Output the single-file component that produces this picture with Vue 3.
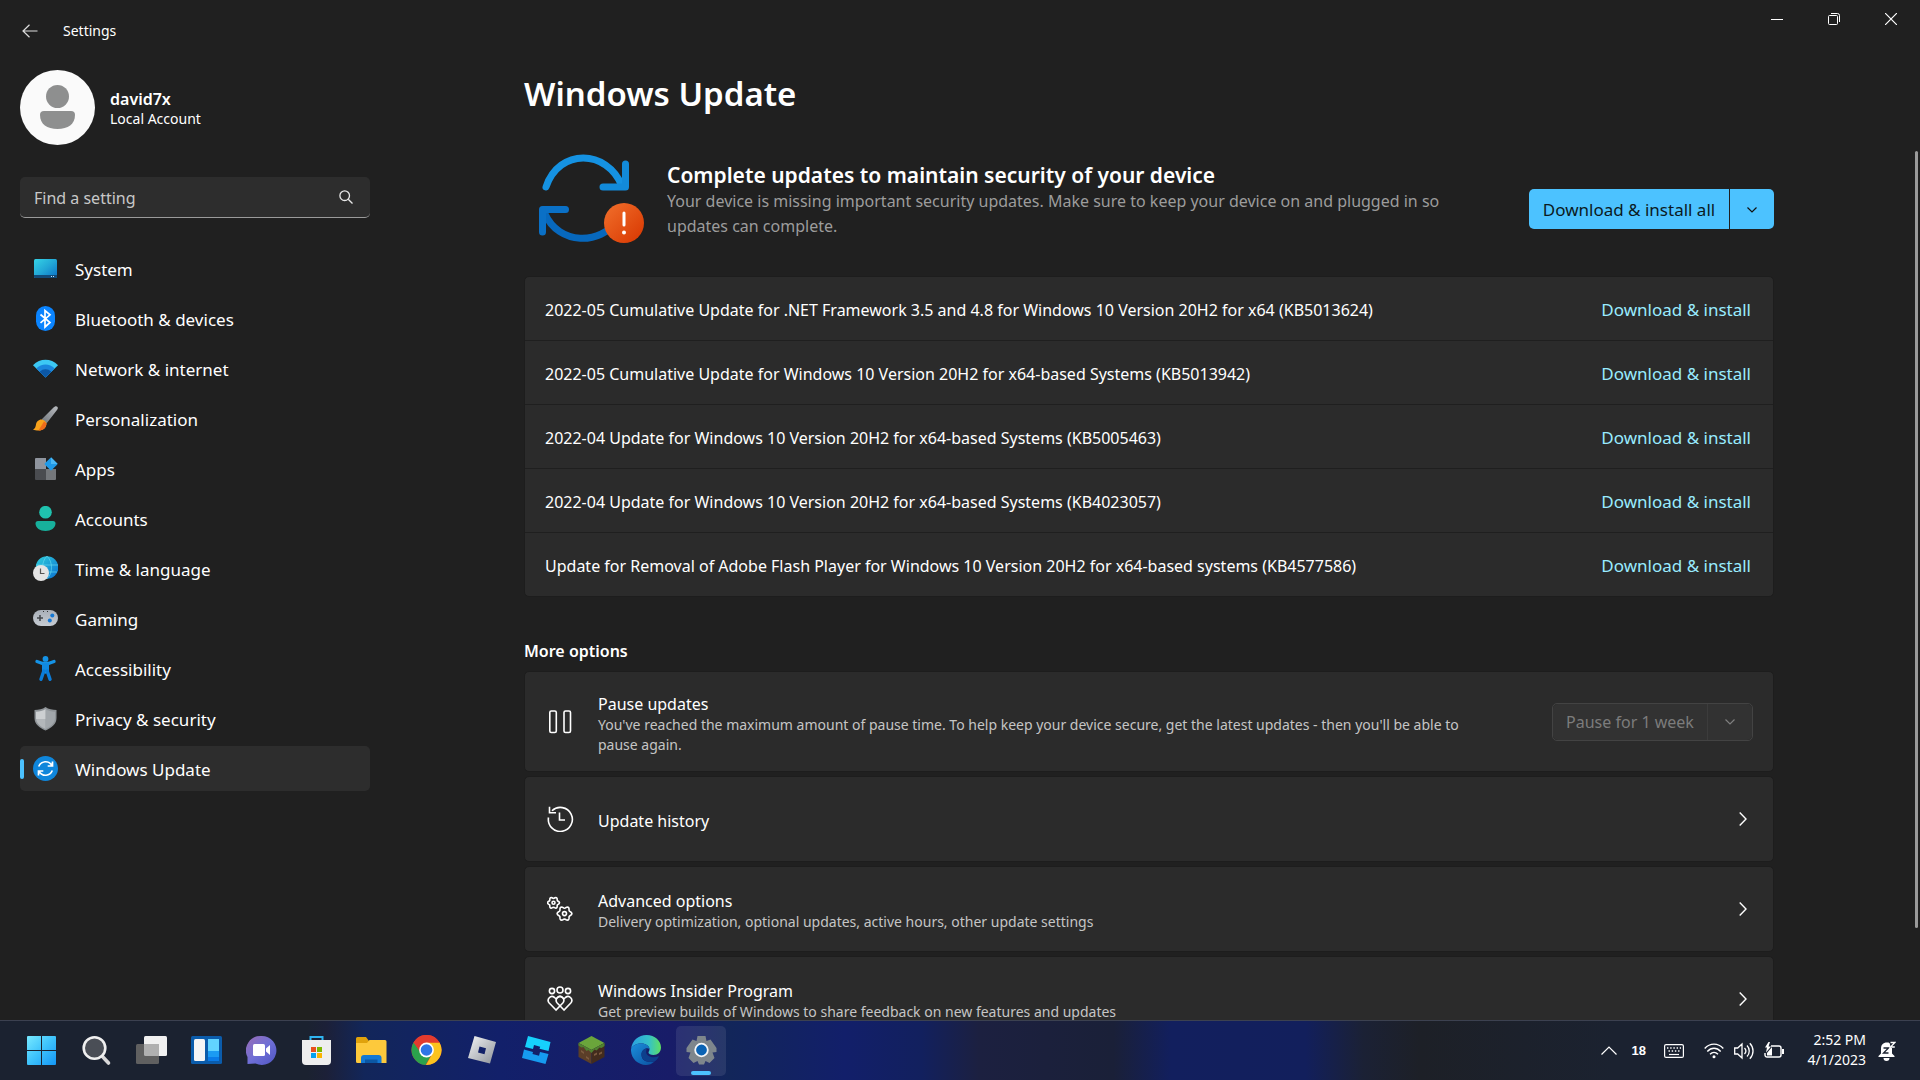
<script setup>
import { ref } from 'vue'

const query = ref('')

const navItems = [
  {
    label: 'System',
    art: `<defs><linearGradient id="n-sys" x1="0" y1="0" x2="1" y2="1"><stop offset="0" stop-color="#35d3e6"/><stop offset=".5" stop-color="#22a7d6"/><stop offset="1" stop-color="#0b6fc4"/></linearGradient></defs>
      <rect x="1" y="3" width="23" height="19" rx="1.500" fill="url(#n-sys)"/><path d="M1 19h23v1.500a1.500 1.500 0 0 1-1.500 1.500h-20A1.500 1.500 0 0 1 1 20.500z" fill="#124a78"/><path d="M18 20h1v1h-1zM20 20h1v1h-1z" fill="#bfe6ff"/>`
  },
  {
    label: 'Bluetooth & devices',
    art: `<rect x="3" y="0" width="19" height="25" rx="9.500" fill="#0a84ff"/><path d="M7.500 8.500l9.500 8-5 4.500V4.500L17 8.800l-9.500 8" fill="none" stroke="#fff" stroke-width="1.700"/>`
  },
  {
    label: 'Network & internet',
    art: `<path d="M0 9.300C7 2 18 2 25 9.300L12.500 21.500z" fill="#3cc8f4"/><path d="M3.300 12.500c5.200-5.200 13.200-5.200 18.400 0L12.500 21.500z" fill="#1a86dd"/><path d="M6.600 15.700c3.600-3.300 8.200-3.300 11.800 0L12.500 21.500z" fill="#0c57a5"/>`
  },
  {
    label: 'Personalization',
    art: `<defs><linearGradient id="n-br" x1="1" y1="0" x2="0" y2="1"><stop offset="0" stop-color="#b9bcc0"/><stop offset="1" stop-color="#6f757b"/></linearGradient></defs>
      <path d="M22 .500c1.600-.800 3.300.400 2.700 2.200-.200.600-.500 1-.900 1.500L13.500 17.500 8.500 13.500 20.500 1.600z" fill="url(#n-br)"/><path d="M8.500 13.500c2.300.3 4.300 1.800 5 4-.300 4.500-3.500 7-8 7-2 0-4-.300-5.500-1 2-.800 2.500-2.500 3-5 .400-2.600 2.500-5 5.500-5z" fill="#f8a21b"/><path d="M11 15.500l2.500 2c-.300 4.500-3.500 7-8 7z" fill="#ee6b1c"/>`
  },
  {
    label: 'Apps',
    art: `<path d="M3 2h10v11H2V3a1 1 0 0 1 1-1z" fill="#8f949d"/><path d="M2 13h11v11H3a1 1 0 0 1-1-1z" fill="#4a4c50"/><path d="M13 13h10v10a1 1 0 0 1-1 1h-9z" fill="#74777b"/><rect x="13.200" y="3.200" width="9.600" height="9.600" rx="1" transform="rotate(45 18 8)" fill="#1f9ae8"/><path d="M18 1.300L24.700 8 18 8z" fill="#4ab8f5"/>`
  },
  {
    label: 'Accounts',
    art: `<circle cx="12.500" cy="6.200" r="6.300" fill="#1fc2ae"/><path d="M5 15h15a2.500 2.500 0 0 1 2.500 2.500c0 4.500-4.500 7.500-10 7.500s-10-3-10-7.500A2.500 2.500 0 0 1 5 15z" fill="#17b09c"/>`
  },
  {
    label: 'Time & language',
    art: `<defs><linearGradient id="n-tm" x1="0" y1="0" x2="1" y2="1"><stop offset="0" stop-color="#2fd0dc"/><stop offset="1" stop-color="#0a6fd0"/></linearGradient></defs>
      <circle cx="14" cy="11.500" r="11.300" fill="url(#n-tm)"/><path d="M3 9h22M4 16h20M14 0c-6 6-6 17 0 23M14 0c6 6 6 17 0 23" stroke="#6fe0f2" stroke-opacity=".6" fill="none"/><circle cx="8" cy="17" r="8" fill="#e4e4e4"/><path d="M7.500 12.500v5h4" stroke="#555" stroke-width="1.200" fill="none"/>`
  },
  {
    label: 'Gaming',
    art: `<defs><linearGradient id="n-gm" x1="0" y1="0" x2="0" y2="1"><stop offset="0" stop-color="#a9afb8"/><stop offset="1" stop-color="#c7ccd3"/></linearGradient></defs>
      <rect x="0" y="4" width="25" height="16" rx="8" fill="url(#n-gm)"/><path d="M7 9v6M4 12h6" stroke="#46494e" stroke-width="1.600"/><circle cx="19.300" cy="9.500" r="2" fill="#1477d4"/><circle cx="16.800" cy="14.500" r="2" fill="#1477d4"/><path d="M10 5h1v1h-1zM14 5h1v1h-1z" fill="#333"/>`
  },
  {
    label: 'Accessibility',
    art: `<circle cx="12.500" cy="2.900" r="2.900" fill="#1593e6"/><path d="M4 5.500l5.500 2h6l5.500-2M12.500 8v8" stroke="#1593e6" stroke-width="3.400" stroke-linecap="round" stroke-linejoin="round" fill="none"/><path d="M9 7h7v8H9z" fill="#118ae0"/><path d="M10.800 15L8 23.300M14.200 15l2.800 8.300" stroke="#0b7cd8" stroke-width="3.400" stroke-linecap="round"/>`
  },
  {
    label: 'Privacy & security',
    art: `<path d="M12.500 1c3 2.300 7 3 11 3v8c0 6-5 10-11 12.500C6.500 22 1.500 18 1.500 12V4c4 0 8-.700 11-3z" fill="#8f9498"/><path d="M12.500 3c2.500 1.800 6 2.700 9.500 2.800V12c0 5-4 8.500-9.500 11z" fill="#a2a7ab"/><path d="M12.500 3C10 4.800 6.500 5.700 3 5.800V12c0 .400 0 .700.100 1h9.400z" fill="#cdd0d2"/><path d="M3.100 13h9.400v10C7.500 20.800 3.600 17.500 3.100 13z" fill="#b3b7ba"/>`
  },
  {
    label: 'Windows Update',
    active: true,
    art: `<circle cx="12.500" cy="12.500" r="12.500" fill="#0f86db"/><path d="M5.700 10.500C8 4.700 15.500 4 19 9.500M19.300 14.500C17 20.300 9.500 21 6 15.500M19.500 5.500v4.500h-4.800M5.500 19.500V15h4.800" stroke="#fff" stroke-width="1.700" fill="none"/>`
  }
]

const updates = [
  '2022-05 Cumulative Update for .NET Framework 3.5 and 4.8 for Windows 10 Version 20H2 for x64 (KB5013624)',
  '2022-05 Cumulative Update for Windows 10 Version 20H2 for x64-based Systems (KB5013942)',
  '2022-04 Update for Windows 10 Version 20H2 for x64-based Systems (KB5005463)',
  '2022-04 Update for Windows 10 Version 20H2 for x64-based Systems (KB4023057)',
  'Update for Removal of Adobe Flash Player for Windows 10 Version 20H2 for x64-based systems (KB4577586)'
]

const gear = (cx, cy, r) => {
  const pts = []
  for (let i = 0; i < 48; i++) {
    const a = (i / 48) * Math.PI * 2
    const k = r * (1 + 0.15 * Math.cos(6 * a))
    pts.push(`${(cx + k * Math.cos(a)).toFixed(2)} ${(cy + k * Math.sin(a)).toFixed(2)}`)
  }
  return `<path d="M${pts.join('L')}z"/>`
}

const options = [
  {
    title: 'Update history',
    art: `<path d="M1.500 11.500A12 12 0 1 0 5 4.800M2.500 .800v6h6.500M12.500 6.500v7.500h5.500"/>`
  },
  {
    title: 'Advanced options',
    detail: 'Delivery optimization, optional updates, active hours, other update settings',
    art: `${gear(6.5, 6.8, 5.2)}<circle cx="6.500" cy="6.800" r="1.500"/>${gear(17.5, 17.6, 6.4)}<circle cx="17.500" cy="17.600" r="2"/>`
  },
  {
    title: 'Windows Insider Program',
    detail: 'Get preview builds of Windows to share feedback on new features and updates',
    art: `<circle cx="5" cy="5" r="2.600"/><circle cx="13" cy="4" r="3"/><circle cx="21" cy="5" r="2.600"/><path d="M9 24l-6.800-7c-3-3.500 1.500-8.500 5.300-5.500L9 12.800l1.500-1.300c3.800-3 8.300 2 5.300 5.500z"/><path d="M17 24l-6.800-7c-3-3.500 1.500-8.500 5.300-5.500l1.500 1.300 1.500-1.300c3.800-3 8.300 2 5.300 5.500z"/>`
  }
]

const taskbar = [
  {
    label: 'Start',
    art: `<defs><linearGradient id="t-st" gradientUnits="userSpaceOnUse" x1="0" y1="0" x2="30" y2="30"><stop offset="0" stop-color="#7cecff"/><stop offset=".5" stop-color="#3fc3fb"/><stop offset="1" stop-color="#1496f5"/></linearGradient></defs><path d="M2 1h13v14H1V2a1 1 0 0 1 1-1zM16 1h13a1 1 0 0 1 1 1v13H16zM1 16h14v14H2a1 1 0 0 1-1-1zM16 16h14v13a1 1 0 0 1-1 1H16z" fill="url(#t-st)"/>`
  },
  {
    label: 'Search',
    art: `<path d="M20.500 20.500l7 7.500" stroke="#d8d8d8" stroke-width="3.600" stroke-linecap="round"/><circle cx="13.500" cy="13" r="10.800" fill="#4a4e56" stroke="#f0f0f0" stroke-width="2.600"/>`
  },
  {
    label: 'Task View',
    art: `<rect x="8" y="1" width="23" height="20" rx="1.500" fill="#f1f1f1"/><rect x="0" y="9" width="23" height="20" rx="1.500" fill="#606060"/><path d="M8 9h15v12H9.500A1.500 1.500 0 0 1 8 19.500z" fill="#b0b0b0"/>`
  },
  {
    label: 'Widgets',
    art: `<rect x="0" y="1" width="31" height="28" rx="1.500" fill="#0b5cab"/><rect x="3" y="4" width="11" height="22" rx="1.500" fill="#f5f5f5"/><path d="M17 4h11v12H17z" fill="#62d3ff"/><path d="M17 16h11v6H17z" fill="#1b9bf3"/><path d="M17 22h11v4H17z" fill="#0a7be8"/>`
  },
  {
    label: 'Chat',
    art: `<defs><linearGradient id="t-ch" x1="0" y1="0" x2="1" y2="1"><stop offset="0" stop-color="#9a6cb4"/><stop offset=".5" stop-color="#6f6fd6"/><stop offset="1" stop-color="#4f55c4"/></linearGradient></defs><path d="M15.500 1a14.500 14.500 0 1 1-6 27.500L1.500 29V22A14.500 14.500 0 0 1 15.500 1z" fill="url(#t-ch)"/><rect x="7" y="9" width="12" height="12" rx="1.500" fill="#fff"/><path d="M20 13.500l4-3.500v10l-4-3.500z" fill="#fff"/>`
  },
  {
    label: 'Microsoft Store',
    art: `<path d="M9.500 7V2h12v5" fill="none" stroke="#2fb4f0" stroke-width="2"/><path d="M1 5h29v21a4 4 0 0 1-4 4H5a4 4 0 0 1-4-4z" fill="#eeeeee"/><path d="M10 12h5v5h-5z" fill="#e8501f"/><path d="M16 12h5v5h-5z" fill="#7cb800"/><path d="M10 18h5v5h-5z" fill="#06a1ee"/><path d="M16 18h5v5h-5z" fill="#fbb400"/>`
  },
  {
    label: 'File Explorer',
    art: `<path d="M0 3.500A1.500 1.500 0 0 1 1.500 2H10l3 4v3H0z" fill="#e0a20c"/><path d="M0 8h11l2.500-3H29a1.500 1.500 0 0 1 1.500 1.500V28H1.500A1.500 1.500 0 0 1 0 26.500z" fill="#fdc93c"/><path d="M5 28v-5a3 3 0 0 1 3-3h14.500a3 3 0 0 1 3 3v5z" fill="#1278d4"/><path d="M9 24.500h12.500V28H9z" fill="#0b57a4"/>`
  },
  {
    label: 'Google Chrome',
    art: `<circle cx="15.500" cy="15" r="15" fill="#e33b2e"/><path d="M2.500 7.500A15 15 0 0 0 14.500 30l7-12-12-.500z" fill="#2ba24c"/><path d="M28.500 7.500A15 15 0 0 1 15 30l7-12.500L15.500 7.500z" fill="#fcc31e"/><path d="M2.500 7.500A15 15 0 0 1 28.500 7.500H15.500L9.500 13z" fill="#e33b2e"/><circle cx="15.500" cy="15" r="7.400" fill="#fff"/><circle cx="15.500" cy="15" r="5.800" fill="#2f76e6"/>`
  },
  {
    label: 'Roblox',
    art: `<defs><linearGradient id="t-rb" x1="0" y1="0" x2="1" y2="1"><stop offset="0" stop-color="#f4f5f6"/><stop offset="1" stop-color="#8d9299"/></linearGradient></defs><path fill-rule="evenodd" d="M8.500 1L30 7l-6 21.500L2 23zM13.500 11.500l-1.500 6 6.500 1.700 1.500-6z" fill="url(#t-rb)"/>`
  },
  {
    label: 'Roblox Studio',
    art: `<path d="M7 1l22.500 6-2 9-9-2.300.700-2-6.200-1.700L12 14 4 12z" fill="#16d1fc"/><path d="M3 14.500l9 2.500-.500 2 6.500 1.700 1-3.700 8.500 2-3 10L1 23z" fill="#169bf0"/>`
  },
  {
    label: 'Minecraft',
    art: `<path d="M15.500 1l13 7-13 7-13-7z" fill="#6aa53b"/><path d="M2.500 8l13 7v14l-13-7z" fill="#5b3e28"/><path d="M28.500 8l-13 7v14l13-7z" fill="#432c1d"/><path d="M2.500 8l13 7 13-7v3l-3 2-2-.500-3 3-2-1-3 3.500-3-3-2 1-3-4-2 .500-3-2z" fill="#4f8230"/><path d="M5 15l3 2v2l-3-2zM10 21l3 2v2l-3-2zM18 19l3-1.500v2L18 21zM23 18l3-1.500v2L23 20z" fill="#7b5a3f"/>`
  },
  {
    label: 'Microsoft Edge',
    art: `<defs><linearGradient id="t-e1" x1="0" y1="0" x2="1" y2="0"><stop offset="0" stop-color="#2a9fe0"/><stop offset=".6" stop-color="#35c1c8"/><stop offset="1" stop-color="#5fdf62"/></linearGradient><linearGradient id="t-e2" x1="0" y1="0" x2="1" y2="1"><stop offset="0" stop-color="#1b8fdc"/><stop offset="1" stop-color="#0b50a0"/></linearGradient></defs>
      <path d="M0 14C1 5.500 7.500 0 15.500 0 24 0 30 6 30 12.500c0 4.500-3.200 7.500-7.500 7.500-3 0-5-1-5-2.500 0-1 1-1.500 1-3.500 0-3-3.500-5.500-8-5.500C5.500 8.500 1.500 10.500 0 14z" fill="url(#t-e1)"/><path d="M0 14c1.500-3.500 5.500-5.500 10.500-5.500 4.500 0 8 2.500 8 5.500-3-2-8 1-8 6 0 5.500 6 8 13 6.500C21 29 18 30 15 30 6.500 30-.500 23 0 14z" fill="url(#t-e2)"/><path d="M10.500 20c-.500-3.500 2-6.500 5.500-6.500-1 2-1.500 5 1 7s7 2.500 11 .500c-1 2.500-2.500 4.200-4.500 5.500-7 1.500-12.500-1-13-6.500z" fill="#0d3f8c"/>`
  },
  {
    label: 'Settings',
    active: true,
    art: `<path d="M11.500 1h8l1 5 4-1.500L30.500 13v4l-4 .500 2 5.500-5 5-4-2-1.500 3.500h-5L11.500 26l-4 2-5-5 2-5.500-4-.500v-4l6-8.500 4 1.500z" fill="#7e868c"/><circle cx="15.500" cy="15" r="9" fill="#7e868c"/><circle cx="15.500" cy="15" r="6.300" fill="#0b63b4" stroke="#f4f6f8" stroke-width="1.800"/>`
  }
]
</script>

<template>
  <div class="desktop">
    <div class="window">
      <aside class="sidebar">
        <header class="app-title">
          <button class="plain back" aria-label="Back">
            <svg width="16" height="14" viewBox="0 0 16 14" fill="none" stroke="#ddd" stroke-width="1.200"><path d="M15.500 7H1M7.500 .700L1 7l6.500 6.300" /></svg>
          </button>
          <span>Settings</span>
        </header>

        <section class="account">
          <svg width="75" height="75" viewBox="0 0 75 75">
            <circle cx="37.500" cy="37.500" r="37.500" fill="#fafafa" />
            <circle cx="37.500" cy="26.500" r="11.500" fill="#8e8f8f" />
            <path d="M24 41h27a4 4 0 0 1 4 4c0 9-7 14-17.500 14S20 54 20 45a4 4 0 0 1 4-4z" fill="#8e8f8f" />
          </svg>
          <div>
            <strong>david7x</strong>
            <span>Local Account</span>
          </div>
        </section>

        <label class="search">
          <input v-model="query" type="text" placeholder="Find a setting" aria-label="Find a setting" />
          <svg width="14" height="14" viewBox="0 0 14 14" fill="none" stroke="#e8e8e8" stroke-width="1.300"><circle cx="5.700" cy="5.700" r="4.800" /><path d="M9.200 9.200L13.500 13.500" /></svg>
        </label>

        <nav>
          <a v-for="item in navItems" :key="item.label" href="#" :class="{ active: item.active }">
            <svg width="25" height="25" viewBox="0 0 25 25" v-html="item.art"></svg>
            <span>{{ item.label }}</span>
          </a>
        </nav>
      </aside>

      <main>
        <div class="caption">
          <button class="plain" aria-label="Minimize"><svg width="12" height="12" viewBox="0 0 12 12"><path d="M0 6h12v1H0z" fill="#fff" /></svg></button>
          <button class="plain" aria-label="Restore"><svg width="12" height="12" viewBox="0 0 12 12" fill="none" stroke="#fff"><rect x=".500" y="2.500" width="9" height="9" rx="1" /><path d="M3 .500h6.500a2 2 0 0 1 2 2V9" /></svg></button>
          <button class="plain" aria-label="Close"><svg width="12" height="12" viewBox="0 0 12 12" fill="none" stroke="#fff" stroke-width="1.200"><path d="M0 0l12 12M12 0L0 12" /></svg></button>
        </div>

        <div class="content">
          <h1>Windows Update</h1>

          <section class="hero">
            <svg width="106" height="90" viewBox="0 0 106 90" fill="none" stroke-linecap="round" stroke-linejoin="round">
              <defs>
                <linearGradient id="alert-fill" x1="0" y1="0" x2="1" y2="1"><stop offset="0" stop-color="#f1702c" /><stop offset="1" stop-color="#d83600" /></linearGradient>
              </defs>
              <path d="M7 33C20-6 68-5 83 32" stroke="#1592e2" stroke-width="7" />
              <path d="M86.500 10v23H64" stroke="#128ada" stroke-width="7" />
              <path d="M6 60C20 91 61 92 80 65" stroke="#0768bd" stroke-width="7" />
              <path d="M3.500 78V55.500h23" stroke="#0a70c6" stroke-width="7" />
              <circle cx="85" cy="69" r="20" fill="url(#alert-fill)" />
              <path d="M85 59v12" stroke="#fff" stroke-width="3" />
              <circle cx="85" cy="78.500" r="2" fill="#fff" />
            </svg>
            <div class="hero-text">
              <h2>Complete updates to maintain security of your device</h2>
              <p>Your device is missing important security updates. Make sure to keep your device on and plugged in so updates can complete.</p>
            </div>
            <div class="split primary">
              <button>Download &amp; install all</button>
              <button aria-label="More install options">
                <svg width="10" height="6" viewBox="0 0 10 6" fill="none" stroke="#101010" stroke-width="1.200"><path d="M.500 .500L5 5 9.500 .500" /></svg>
              </button>
            </div>
          </section>

          <ul class="updates">
            <li v-for="name in updates" :key="name">
              <span>{{ name }}</span>
              <a href="#">Download &amp; install</a>
            </li>
          </ul>

          <h3>More options</h3>

          <section class="card pause">
            <svg width="27" height="26" viewBox="0 0 27 26" fill="none" stroke="#fff" stroke-width="1.600"><rect x="2.800" y="2" width="6.500" height="21.500" rx="1.500" /><rect x="17" y="2" width="6.500" height="21.500" rx="1.500" /></svg>
            <div class="card-text">
              <b>Pause updates</b>
              <p>You've reached the maximum amount of pause time. To help keep your device secure, get the latest updates - then you'll be able to pause again.</p>
            </div>
            <div class="split muted">
              <button disabled>Pause for 1 week</button>
              <button disabled aria-label="Choose pause length">
                <svg width="10" height="6" viewBox="0 0 10 6" fill="none" stroke="#7f7f7f" stroke-width="1.200"><path d="M.500 .500L5 5 9.500 .500" /></svg>
              </button>
            </div>
          </section>

          <a v-for="option in options" :key="option.title" href="#" class="card">
            <svg width="27" height="26" viewBox="0 0 27 26" fill="none" stroke="#fff" stroke-width="1.600" v-html="option.art"></svg>
            <div class="card-text">
              <b>{{ option.title }}</b>
              <p v-if="option.detail">{{ option.detail }}</p>
            </div>
            <svg width="8" height="14" viewBox="0 0 8 14" fill="none" stroke="#fff" stroke-width="1.400"><path d="M.700 .500L7 7 .700 13.500" /></svg>
          </a>
        </div>
        <div class="scroll-thumb"></div>
      </main>
    </div>

    <footer class="taskbar">
      <div class="pinned">
        <button v-for="app in taskbar" :key="app.label" class="plain" :class="{ active: app.active }" :aria-label="app.label">
          <svg width="31" height="31" viewBox="0 0 31 31" v-html="app.art"></svg>
        </button>
      </div>

      <div class="tray">
        <button class="plain" aria-label="Show hidden icons"><svg width="16" height="9" viewBox="0 0 16 9" fill="none" stroke="#fff" stroke-width="1.200"><path d="M.500 8.500L8 1l7.500 7.500" /></svg></button>
        <span class="temp">18</span>
        <svg width="20" height="14" viewBox="0 0 20 14" fill="none" stroke="#fff"><rect x=".600" y=".600" width="18.800" height="12.800" rx="1.500" stroke-width="1.200" /><path d="M3 4h14M4.500 7h12" stroke-width="1.400" stroke-dasharray="1.400 1.800" /><path d="M5 10.500h10" stroke-width="1.200" /></svg>
        <div class="status">
          <svg width="20" height="16" viewBox="0 0 20 16" fill="none" stroke="#fff" stroke-width="1.400"><path d="M.700 5.500C6-.300 14-.300 19.300 5.500M3.300 8.500c3.900-4.300 9.500-4.300 13.400 0M6 11.300c2.500-2.600 5.500-2.600 8 0" /><circle cx="10" cy="13.700" r="1.500" fill="#fff" stroke="none" /></svg>
          <svg width="20" height="18" viewBox="0 0 20 18" fill="none" stroke="#fff" stroke-width="1.300"><path d="M.700 6h3L8 2v14l-4.300-4h-3zM10.500 6c1.600 1.700 1.600 4.300 0 6M13 3.500c3 3 3 8 0 11M15.800 1.200c4.300 4.300 4.300 11.300 0 15.600" /></svg>
          <svg width="20" height="18" viewBox="0 0 20 18" fill="none" stroke="#fff" stroke-width="1.400"><path d="M7 4h8a2 2 0 0 1 2 2v7a2 2 0 0 1-2 2H3a2 2 0 0 1-2-2v-2" /><path d="M18 7h2v5h-2z" fill="#fff" stroke="none" /><path d="M4.500 0L1 5.500h2L2 10.500l5-6H4.500L6 0zM3 13.500V11l5-6v8.500z" fill="#fff" stroke="none" /></svg>
        </div>
        <div class="clock"><time>2:52 PM</time><time>4/1/2023</time></div>
        <button class="plain" aria-label="Notifications">
          <svg width="18" height="20" viewBox="0 0 18 20"><path d="M9 1.500c-4 0-6 2.500-6 6v5L.500 15v1h16v-1L14 12.500v-5c0-3.500-1-6-5-6zM5.500 17h6a3 3 0 0 1-6 0z" fill="#fff" /><path d="M5.500 7h5l-5 5h5" fill="none" stroke="#1b2230" stroke-width="1.300" /><path d="M11 0h7v7h-5z" fill="#1b2230" /><path d="M12.500 1.500h4.300l-4.300 4.500h4.300" fill="none" stroke="#fff" stroke-width="1.300" /></svg>
        </button>
      </div>
    </footer>
  </div>
</template>

<style>
body {
  margin: 0;
  background: #202020;
}
</style>

<style scoped>
.desktop {
  display: flex;
  flex-direction: column;
  height: 100vh;
  overflow: hidden;
  background: #202020;
  color: #fff;
  font-family: "Noto Sans", "Open Sans", sans-serif;
  font-size: 16px;
  line-height: 24px;
}
button, input { font: inherit; color: inherit; }
button { cursor: pointer; }
button:disabled { cursor: default; }
a { color: inherit; text-decoration: none; }
svg { display: block; flex: none; }
h1, h2, h3, p, ul { margin: 0; padding: 0; }
.plain {
  display: flex;
  align-items: center;
  justify-content: center;
  padding: 0;
  border: 0;
  background: none;
}

.window {
  flex: 1;
  min-height: 0;
  display: flex;
}
.sidebar {
  flex: none;
  width: 350px;
  padding: 0 8px 0 20px;
}
.app-title {
  display: flex;
  align-items: center;
  gap: 25px;
  height: 62px;
  font-size: 14px;
}
.back { padding-left: 2px; }
.account {
  display: flex;
  align-items: center;
  gap: 15px;
  margin-top: 8px;
}
.account div {
  display: flex;
  flex-direction: column;
  padding-top: 3px;
  font-size: 14px;
  line-height: 20px;
}
.account strong { font-size: 16px; font-weight: 600; }
.search {
  display: flex;
  align-items: center;
  height: 40px;
  margin: 32px 0 28px;
  padding: 0 17px 0 14px;
  border-radius: 5px;
  border-bottom: 1px solid #9a9a9a;
  background: #2d2d2d;
}
.search input {
  flex: 1;
  min-width: 0;
  padding: 2px 0 0;
  border: 0;
  outline: 0;
  background: none;
}
.search input::placeholder { color: #c8c8c8; opacity: 1; }
nav {
  display: flex;
  flex-direction: column;
  gap: 5px;
  font-size: 17px;
}
nav a {
  position: relative;
  display: flex;
  align-items: center;
  gap: 17px;
  height: 45px;
  padding-left: 13px;
  border-radius: 5px;
}
nav a span { padding-top: 2px; }
nav a.active { background: #2d2d2d; }
nav a.active::before {
  content: "";
  position: absolute;
  left: 0;
  top: 13px;
  width: 4px;
  height: 20px;
  border-radius: 2px;
  background: #4cc2ff;
}

main {
  position: relative;
  flex: 1;
  min-width: 0;
  overflow: hidden;
}
.caption {
  display: flex;
  justify-content: flex-end;
  padding-right: 1px;
}
.caption button { width: 57px; height: 38px; }
.content {
  max-width: 1250px;
  margin: 0 auto;
}
h1 {
  margin-top: 34px;
  font-size: 33px;
  line-height: 44px;
  font-weight: 600;
}
.hero {
  display: flex;
  align-items: center;
  gap: 22px;
  margin-top: 38px;
  padding-left: 15px;
}
.hero-text { flex: 1; padding: 1px 20px 0 0; }
h2 { font-size: 21px; line-height: 28px; font-weight: 600; }
.hero-text p { line-height: 25px; color: #9c9c9c; }
.split { display: flex; flex: none; }
.split button {
  display: flex;
  align-items: center;
  justify-content: center;
  padding: 1px 0 0;
  border: 0;
  white-space: nowrap;
}
.split button:first-child { border-radius: 5px 0 0 5px; }
.split button:last-child { border-radius: 0 5px 5px 0; }
.primary { gap: 1px; margin-top: 20px; font-size: 17px; }
.primary button {
  width: 44px;
  height: 40px;
  background: #4cc2ff;
  color: #0b1a22;
}
.primary button:first-child { width: 200px; }
.muted {
  border: 1px solid #434343;
  border-radius: 5px;
}
.muted button {
  width: 44px;
  height: 36px;
  background: #323232;
  color: #7c7c7c;
}
.muted button:first-child { width: 155px; border-right: 1px solid #3c3c3c; }

.updates {
  margin-top: 32px;
  border: 1px solid #1d1d1d;
  border-radius: 5px;
  background: #2b2b2b;
  list-style: none;
}
.updates li {
  display: flex;
  align-items: center;
  justify-content: space-between;
  gap: 24px;
  height: 61px;
  padding: 2px 22px 0 20px;
}
.updates li + li { border-top: 1px solid #1f1f1f; }
.updates a { color: #99ebff; font-size: 17px; }

h3 { margin: 42px 0 8px; font-size: 16px; line-height: 24px; font-weight: 600; }
.card {
  display: flex;
  align-items: center;
  min-height: 84px;
  margin-bottom: 4px;
  padding: 0 26px 0 22px;
  border: 1px solid #1d1d1d;
  border-radius: 5px;
  background: #2b2b2b;
}
.pause { min-height: 99px; padding-right: 20px; }
.card-text { flex: 1; margin: 0 60px 0 24px; padding-top: 4px; }
.card-text b { display: block; font-weight: 400; line-height: 22px; }
.card-text p { font-size: 14px; line-height: 20px; color: #c5c5c5; }
.scroll-thumb {
  position: absolute;
  right: 2px;
  top: 151px;
  bottom: 92px;
  width: 3px;
  border-radius: 2px;
  background: #9a9a9a;
}

.taskbar {
  display: flex;
  justify-content: space-between;
  height: 59px;
  padding: 0 24px 0 16px;
  border-top: 1px solid #3c4150;
  background: linear-gradient(90deg, #1b2230 0%, #1b2230 16%, #1c2038 17%, #12265a 19%, #12206a 26%, #181c68 35%, #12265a 38%, #121f6a 44%, #12205e 48%, #1c2040 51%, #1a2038 58%, #121f5e 61%, #121f5c 68%, #1b2135 71%, #1d2027 74%, #1b2230 84%);
}
.pinned { display: flex; align-items: center; gap: 5px; }
.pinned button { position: relative; width: 50px; height: 50px; border-radius: 5px; }
.pinned .active { background: rgba(255, 255, 255, 0.09); }
.pinned .active::after {
  content: "";
  position: absolute;
  left: 15px;
  bottom: 1px;
  width: 20px;
  height: 4px;
  border-radius: 2px;
  background: #4cc2ff;
}
.tray { display: flex; align-items: center; }
.temp { margin: 0 18px 0 15px; font: bold 13px/20px "Liberation Sans", sans-serif; }
.status { display: flex; align-items: center; gap: 10px; margin: 0 12px 0 20px; }
.clock {
  display: flex;
  flex-direction: column;
  align-items: flex-end;
  width: 70px;
  margin-right: 12px;
  padding-bottom: 2px;
  font-size: 14px;
  line-height: 20px;
}
</style>
